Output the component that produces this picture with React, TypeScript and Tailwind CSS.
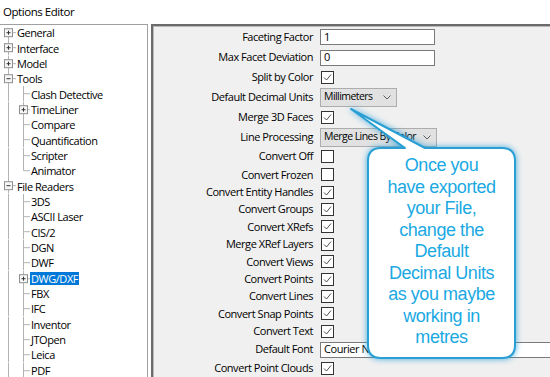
import React from 'react';

type TreeNode = {
  label: string;
  level: 0 | 1;
  exp?: '+' | '-';
  selected?: boolean;
  first?: boolean;
  last?: boolean;
};

const tree: TreeNode[] = [
  { label: 'General', level: 0, exp: '+', first: true },
  { label: 'Interface', level: 0, exp: '+' },
  { label: 'Model', level: 0, exp: '+' },
  { label: 'Tools', level: 0, exp: '-' },
  { label: 'Clash Detective', level: 1 },
  { label: 'TimeLiner', level: 1, exp: '+' },
  { label: 'Compare', level: 1 },
  { label: 'Quantification', level: 1 },
  { label: 'Scripter', level: 1 },
  { label: 'Animator', level: 1, last: true },
  { label: 'File Readers', level: 0, exp: '-' },
  { label: '3DS', level: 1 },
  { label: 'ASCII Laser', level: 1 },
  { label: 'CIS/2', level: 1 },
  { label: 'DGN', level: 1 },
  { label: 'DWF', level: 1 },
  { label: 'DWG/DXF', level: 1, exp: '+', selected: true },
  { label: 'FBX', level: 1 },
  { label: 'IFC', level: 1 },
  { label: 'Inventor', level: 1 },
  { label: 'JTOpen', level: 1 },
  { label: 'Leica', level: 1 },
  { label: 'PDF', level: 1 },
];

type Row = {
  label: string;
  h: string;
  type: 'text' | 'check' | 'select' | 'font';
  value?: string;
  on?: boolean;
  w?: string;
};

const rows: Row[] = [
  { label: 'Faceting Factor', h: 'h-[20.5px]', type: 'text', value: '1' },
  { label: 'Max Facet Deviation', h: 'h-[20px]', type: 'text', value: '0' },
  { label: 'Split by Color', h: 'h-[19.5px]', type: 'check', on: true },
  { label: 'Default Decimal Units', h: 'h-[20.5px]', type: 'select', value: 'Millimeters', w: 'w-[77px]' },
  { label: 'Merge 3D Faces', h: 'h-[20px]', type: 'check', on: true },
  { label: 'Line Processing', h: 'h-[19.5px]', type: 'select', value: 'Merge Lines By Color', w: 'w-[117px]' },
  { label: 'Convert Off', h: 'h-[19px]', type: 'check', on: false },
  { label: 'Convert Frozen', h: 'h-[17.5px]', type: 'check', on: false },
  { label: 'Convert Entity Handles', h: 'h-[17.4px]', type: 'check', on: true },
  { label: 'Convert Groups', h: 'h-[17.4px]', type: 'check', on: true },
  { label: 'Convert XRefs', h: 'h-[17.4px]', type: 'check', on: true },
  { label: 'Merge XRef Layers', h: 'h-[17.4px]', type: 'check', on: true },
  { label: 'Convert Views', h: 'h-[17.4px]', type: 'check', on: true },
  { label: 'Convert Points', h: 'h-[17.4px]', type: 'check', on: true },
  { label: 'Convert Lines', h: 'h-[17.4px]', type: 'check', on: true },
  { label: 'Convert Snap Points', h: 'h-[17.4px]', type: 'check', on: true },
  { label: 'Convert Text', h: 'h-[17.4px]', type: 'check', on: true },
  { label: 'Default Font', h: 'h-[19px]', type: 'font', value: 'Courier New' },
  { label: 'Convert Point Clouds', h: 'h-[18px]', type: 'check', on: true },
];

const LINE = '#b4b4b4';
const RH = 15.35;
const C = 7.7;

function Expander({ x, sign }: { x: number; sign: '+' | '-' }) {
  return (
    <g>
      <rect x={x + 0.5} y={C - 4} width={8} height={8} fill="#f6f6f6" stroke="#8e8f8f" />
      <line x1={x + 2.5} y1={C} x2={x + 6.5} y2={C} stroke="#333" />
      {sign === '+' && <line x1={x + 4.5} y1={C - 2} x2={x + 4.5} y2={C + 2} stroke="#333" />}
    </g>
  );
}

function Gutter({ node }: { node: TreeNode }) {
  if (node.level === 0) {
    return (
      <svg width={16} height={RH} className="shrink-0">
        <line x1={8.5} y1={node.first ? C : 0} x2={8.5} y2={RH} stroke={LINE} />
        <line x1={12.5} y1={C} x2={16} y2={C} stroke={LINE} />
        {node.exp && <Expander x={4} sign={node.exp} />}
      </svg>
    );
  }
  return (
    <svg width={30} height={RH} className="shrink-0">
      <line x1={8.5} y1={0} x2={8.5} y2={RH} stroke={LINE} />
      <line x1={23.5} y1={0} x2={23.5} y2={node.last ? C : RH} stroke={LINE} />
      <line x1={23.5} y1={C} x2={30} y2={C} stroke={LINE} />
      {node.exp && <Expander x={19} sign={node.exp} />}
    </svg>
  );
}

function Check({ on }: { on?: boolean }) {
  return (
    <div className="w-[13px] h-[13px] border border-[#333333] bg-white ml-[1px]">
      {on && (
        <svg width={11} height={11} viewBox="0 0 11 11">
          <path d="M2 5.5 L4.5 8 L9 2.5" fill="none" stroke="#3c3c3c" strokeWidth={0.9} />
        </svg>
      )}
    </div>
  );
}

function Chevron() {
  return (
    <svg width={8} height={5} viewBox="0 0 8 5" className="shrink-0">
      <path d="M0.5 0.5 L4 4 L7.5 0.5" fill="none" stroke="#606060" />
    </svg>
  );
}

function Control({ row }: { row: Row }) {
  if (row.type === 'text') {
    return (
      <div className="w-[115px] h-[16px] border border-[#7a7a7a] bg-white px-[3px] flex items-center">
        {row.value}
      </div>
    );
  }
  if (row.type === 'font') {
    return (
      <div className="w-[240px] h-[16px] border border-[#7a7a7a] bg-white px-[3px] flex items-center whitespace-nowrap">
        {row.value}
      </div>
    );
  }
  if (row.type === 'select') {
    return (
      <div className={`${row.w} h-[19px] border border-[#adadad] bg-[#e1e1e1] pl-[3px] pr-[5px] flex items-center justify-between whitespace-nowrap overflow-hidden text-[10.5px] tracking-[-0.55px]`}>
        <span>{row.value}</span>
        <Chevron />
      </div>
    );
  }
  return <Check on={row.on} />;
}

function Callout() {
  return (
    <div className="absolute left-[340px] top-[100px] w-[190px] h-[275px]">
      <svg width={190} height={275} className="absolute inset-0 drop-shadow-[0_0_3px_rgba(40,160,220,0.85)]">
        <path
          d="M41 48 L65 48 L11 9 L85 48 L162 48 Q175 48 175 61 L175 245 Q175 258 162 258 L41 258 Q28 258 28 245 L28 61 Q28 48 41 48 Z"
          fill="#ffffff"
          stroke="#2a9fd4"
          strokeWidth={2}
          strokeLinejoin="round"
        />
      </svg>
      <div className="absolute left-[28px] top-[48px] w-[147px] pt-[7px] text-center text-[18px] leading-[21.5px] text-[#1ba9e3] font-['Liberation_Sans',Arial,sans-serif]">
        Once you
        <br />
        have exported
        <br />
        your File,
        <br />
        change the
        <br />
        Default
        <br />
        Decimal Units
        <br />
        as you maybe
        <br />
        working in
        <br />
        metres
      </div>
    </div>
  );
}

export default function App() {
  return (
    <div className="relative w-[550px] h-[377px] overflow-hidden bg-white text-black text-[11px] tracking-[-0.45px] font-['Open_Sans',sans-serif]">
      <div className="h-[24px] pl-[3px] flex items-center text-[11.5px]">Options Editor</div>
      <div className="flex h-[353px]">
        <div className="w-[148px] shrink-0 border-t border-r border-[#a0a0a0] bg-white">
          {tree.map((node) => (
            <div key={node.label} className="h-[15.35px] flex items-center">
              <Gutter node={node} />
              <span
                className={
                  node.selected
                    ? 'px-[1px] h-[13px] leading-[13px] bg-[#0078d7] text-white'
                    : 'ml-[1px] leading-[13px]'
                }
              >
                {node.label}
              </span>
            </div>
          ))}
        </div>
        <div className="ml-[3px] flex-1 border-l-2 border-t-2 border-[#6b6b6b] bg-[#f0f0f0] shadow-[inset_1px_1px_0_#b9b9b9] pt-[1px]">
          {rows.map((row) => (
            <div key={row.label} className={`${row.h} flex items-center`}>
              <div className="w-[160px] shrink-0 text-right">{row.label}</div>
              <div className="ml-[7px]">
                <Control row={row} />
              </div>
            </div>
          ))}
        </div>
      </div>
      <Callout />
    </div>
  );
}
